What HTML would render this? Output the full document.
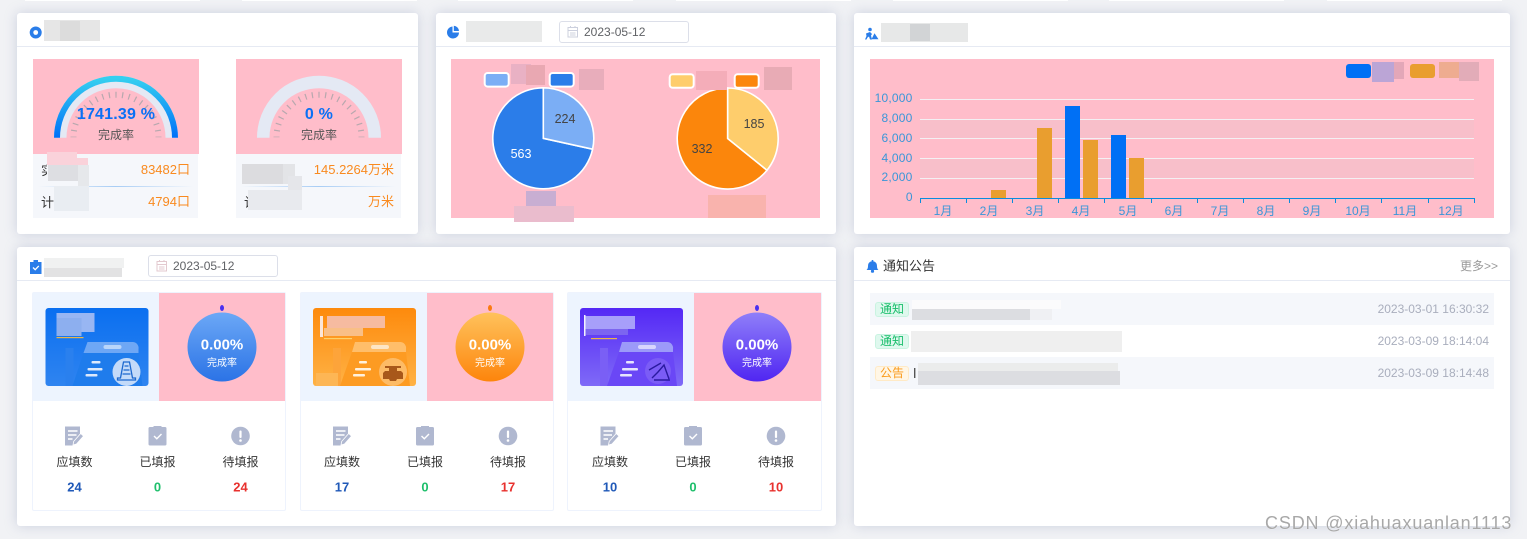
<!DOCTYPE html>
<html lang="zh-CN">
<head>
<meta charset="utf-8">
<title>Dashboard</title>
<style>
html,body{margin:0;padding:0}
body{width:1527px;height:539px;overflow:hidden;position:relative;background:#f1f2f5;font-family:"Liberation Sans","Noto Sans CJK SC",sans-serif;color:#333}
.card{position:absolute;background:#fff;border-radius:3px;box-shadow:0 0 12px rgba(150,160,190,.42)}
.a{position:absolute}
.hl{position:absolute;height:1px;background:#e6eaf3}
.c,.l,.r{position:absolute;white-space:nowrap;line-height:1}
.c{transform:translate(-50%,-50%)}
.l{transform:translateY(-50%)}
.r{transform:translate(-100%,-50%)}
.pink{position:absolute;background:#ffbdca}
.date{position:absolute;width:128px;height:20px;border:1px solid #dcdfe9;border-radius:3px;background:#fff;font-size:12px;line-height:20px;color:#606266;text-indent:24px}
.tag{position:absolute;left:875px;border-radius:3px;font-size:12px;line-height:13px;text-align:center}
.g{background:#dff8ee;border:1px solid #c9f3e1;color:#19be6b;width:32px;height:13px}
.o{background:#fff6e6;border:1px solid #ffeac6;color:#fa9b1c;width:32px;height:13px}
.time{font-size:12px;color:#a9aebd}
.big{font-size:15px;font-weight:bold;color:#fff}
.sm{font-size:10px;color:#fff}
.lb{font-size:12px;color:#333}
.n{font-size:13px;font-weight:bold}
.ax{font-size:12px;color:#3a96d8}
.or{font-size:13px;color:#f98a1f}
svg{position:absolute;left:0;top:0}
</style>
</head>
<body>
<!-- top slivers -->
<div class="a" style="left:25px;top:0;width:175px;height:1px;background:#fff"></div>
<div class="a" style="left:242px;top:0;width:175px;height:1px;background:#fff"></div>
<div class="a" style="left:458px;top:0;width:175px;height:1px;background:#fff"></div>
<div class="a" style="left:676px;top:0;width:175px;height:1px;background:#fff"></div>
<div class="a" style="left:893px;top:0;width:175px;height:1px;background:#fff"></div>
<div class="a" style="left:1109px;top:0;width:175px;height:1px;background:#fff"></div>
<div class="a" style="left:1327px;top:0;width:175px;height:1px;background:#fff"></div>

<!-- cards -->
<div class="card" style="left:17px;top:13px;width:401px;height:221px"></div>
<div class="card" style="left:436px;top:13px;width:400px;height:221px"></div>
<div class="card" style="left:854px;top:13px;width:656px;height:221px"></div>
<div class="card" style="left:17px;top:247px;width:819px;height:279px"></div>
<div class="card" style="left:854px;top:247px;width:656px;height:279px"></div>
<div class="hl" style="left:17px;top:46px;width:401px"></div>
<div class="hl" style="left:436px;top:46px;width:400px"></div>
<div class="hl" style="left:854px;top:46px;width:656px"></div>
<div class="hl" style="left:17px;top:280px;width:819px"></div>
<div class="hl" style="left:854px;top:280px;width:656px"></div>

<!-- pink panels -->
<div class="pink" style="left:33px;top:59px;width:166px;height:95px"></div>
<div class="pink" style="left:236px;top:59px;width:166px;height:95px"></div>
<div class="a" style="left:33px;top:154px;width:165px;height:64px;background:#f5f7fb"></div>
<div class="a" style="left:236px;top:154px;width:165px;height:64px;background:#f5f7fb"></div>
<div class="pink" style="left:451px;top:59px;width:369px;height:159px"></div>
<div class="pink" style="left:870px;top:59px;width:624px;height:159px"></div>

<!-- sub cards bottom -->
<div class="a" style="left:32px;top:292px;width:252px;height:217px;border:1px solid #eef3fd;border-radius:2px;background:#fff"></div>
<div class="a" style="left:300px;top:292px;width:252px;height:217px;border:1px solid #eef3fd;border-radius:2px;background:#fff"></div>
<div class="a" style="left:567px;top:292px;width:253px;height:217px;border:1px solid #eef3fd;border-radius:2px;background:#fff"></div>
<div class="a" style="left:33px;top:293px;width:126px;height:108px;background:#edf4fe"></div>
<div class="pink" style="left:159px;top:293px;width:126px;height:108px"></div>
<div class="a" style="left:301px;top:293px;width:126px;height:108px;background:#edf4fe"></div>
<div class="pink" style="left:427px;top:293px;width:126px;height:108px"></div>
<div class="a" style="left:568px;top:293px;width:126px;height:108px;background:#edf4fe"></div>
<div class="pink" style="left:694px;top:293px;width:127px;height:108px"></div>

<!-- notice rows -->
<div class="a" style="left:870px;top:293px;width:624px;height:32px;background:#f5f7fb"></div>
<div class="a" style="left:870px;top:357px;width:624px;height:32px;background:#f5f7fb"></div>

<!-- chart bands -->
<div class="a" style="left:920px;top:119px;width:554px;height:19px;background:#f8bfca"></div>
<div class="a" style="left:920px;top:158px;width:554px;height:20px;background:#f8bfca"></div>

<svg width="1527" height="539" viewBox="0 0 1527 539">
<defs>
<linearGradient id="gg" x1="0" y1="1" x2="0" y2="0"><stop offset="0" stop-color="#0070f8"/><stop offset="1" stop-color="#35cff0"/></linearGradient>
<linearGradient id="b1" x1="0" y1="0" x2="0" y2="1"><stop offset="0" stop-color="#0a6ff0"/><stop offset="1" stop-color="#2f84f0"/></linearGradient>
<linearGradient id="b2" x1="0" y1="0" x2="0" y2="1"><stop offset="0" stop-color="#fd8a0c"/><stop offset="1" stop-color="#ffb245"/></linearGradient>
<linearGradient id="b3" x1="0" y1="0" x2="0" y2="1"><stop offset="0" stop-color="#5428f5"/><stop offset="1" stop-color="#7f6af7"/></linearGradient>
<linearGradient id="c1" x1="0" y1="0" x2="0" y2="1"><stop offset="0" stop-color="#6ca8f6"/><stop offset="1" stop-color="#2b73e6"/></linearGradient>
<linearGradient id="c2" x1="0" y1="0" x2="0" y2="1"><stop offset="0" stop-color="#ffc25c"/><stop offset="1" stop-color="#fd850c"/></linearGradient>
<linearGradient id="c3" x1="0" y1="0" x2="0" y2="1"><stop offset="0" stop-color="#8f7ff9"/><stop offset="1" stop-color="#5026f2"/></linearGradient>
<linearGradient id="dv" x1="0" y1="0" x2="1" y2="0"><stop offset="0" stop-color="#a8cdf5" stop-opacity="0"/><stop offset=".5" stop-color="#a8cdf5"/><stop offset="1" stop-color="#a8cdf5" stop-opacity="0"/></linearGradient>
<clipPath id="ic"><rect width="103" height="78" rx="3"/></clipPath>
</defs>

<!-- gauges -->
<g fill="none">
<path d="M60.25 137.7A55.75 55.75 0 0 1 171.75 137.7" stroke="#e4e9f4" stroke-width="12.5"/>
<path d="M57 137.7A59 59 0 0 1 175 137.7" stroke="url(#gg)" stroke-width="6"/>
<path d="M73.5 137.2A42.5 42.5 0 0 1 158.5 137.2" stroke="#b8a8ae" stroke-width="6" pathLength="100" stroke-dasharray=".9 4.1" stroke-dashoffset=".45"/>
<path d="M263.25 137.7A55.75 55.75 0 0 1 374.75 137.7" stroke="#e4e9f4" stroke-width="12.5"/>
<path d="M276.5 137.2A42.5 42.5 0 0 1 361.5 137.2" stroke="#b8a8ae" stroke-width="6" pathLength="100" stroke-dasharray=".9 4.1" stroke-dashoffset=".45"/>
</g>
<rect x="38" y="186" width="155" height="1" fill="url(#dv)"/>
<rect x="241" y="186" width="155" height="1" fill="url(#dv)"/>

<!-- pies -->
<g stroke="#fff" stroke-width="1.6">
<path d="M543.3 138.3L592.6 149.2A50.5 50.5 0 1 1 543.3 87.8Z" fill="#2b7de9"/>
<path d="M543.3 138.3L543.3 87.8A50.5 50.5 0 0 1 592.6 149.2Z" fill="#7baef5"/>
<path d="M727.7 138.5L767 170.2A50.5 50.5 0 1 1 727.7 88Z" fill="#fb860c"/>
<path d="M727.7 138.5L727.7 88A50.5 50.5 0 0 1 767 170.2Z" fill="#fecd6c"/>
</g>
<g stroke="#fff" stroke-width="2">
<rect x="484.7" y="73" width="24" height="13.6" rx="3" fill="#7baef5"/>
<rect x="549.7" y="73" width="24" height="13.6" rx="3" fill="#2b7de9"/>
<rect x="669.7" y="74.2" width="24" height="13.6" rx="3" fill="#fecd6c"/>
<rect x="734.7" y="74.2" width="24" height="13.6" rx="3" fill="#fb860c"/>
</g>

<!-- bar chart -->
<g fill="#f3f0f3">
<rect x="920" y="99" width="554" height="1"/><rect x="920" y="119" width="554" height="1"/><rect x="920" y="138" width="554" height="1"/><rect x="920" y="158" width="554" height="1"/><rect x="920" y="178" width="554" height="1"/>
</g>
<g fill="#0a8ddc">
<rect x="920" y="198" width="555" height="1"/>
<rect x="920" y="198" width="1" height="5"/><rect x="966" y="198" width="1" height="5"/><rect x="1012" y="198" width="1" height="5"/><rect x="1058" y="198" width="1" height="5"/><rect x="1104" y="198" width="1" height="5"/><rect x="1151" y="198" width="1" height="5"/><rect x="1197" y="198" width="1" height="5"/><rect x="1243" y="198" width="1" height="5"/><rect x="1289" y="198" width="1" height="5"/><rect x="1335" y="198" width="1" height="5"/><rect x="1381" y="198" width="1" height="5"/><rect x="1428" y="198" width="1" height="5"/><rect x="1474" y="198" width="1" height="5"/>
</g>
<g fill="#e99e2f">
<rect x="991" y="190" width="15" height="8"/>
<rect x="1037" y="128" width="15" height="70"/>
<rect x="1083" y="140" width="15" height="58"/>
<rect x="1129" y="158" width="15" height="40"/>
<rect x="1410" y="64" width="25" height="14" rx="3"/>
</g>
<g fill="#0070f5">
<rect x="1065" y="106" width="15" height="92"/>
<rect x="1111" y="135" width="15" height="63"/>
<rect x="1346" y="64" width="25" height="14" rx="3"/>
</g>

<!-- blur patches -->
<g>
<rect x="44" y="20" width="56" height="21" fill="#e6e6e6"/><rect x="60" y="21" width="20" height="20" fill="#dcdcdc"/>
<rect x="47" y="152" width="30" height="6" fill="#fad2da"/><rect x="47" y="158" width="41" height="7" fill="#fad2da"/><rect x="48" y="165" width="30" height="16" fill="#dddee2"/><rect x="78" y="165" width="11" height="21" fill="#e6e8eb"/><rect x="54" y="186" width="35" height="25" fill="#e9edf2"/>
<rect x="242" y="164" width="41" height="20" fill="#dcdcdf"/><rect x="283" y="164" width="12" height="20" fill="#e3e4e7"/><rect x="288" y="176" width="14" height="14" fill="#e5e6ea"/><rect x="248" y="190" width="54" height="20" fill="#e8eaee"/>
<rect x="466" y="21" width="76" height="21" fill="#e9eaea"/>
<rect x="511" y="64" width="20" height="20" fill="#e9b1c4"/><rect x="526" y="65" width="19" height="20" fill="#e9a8b2"/>
<rect x="579" y="69" width="25" height="21" fill="#e8adbb"/>
<rect x="696" y="71" width="31" height="19" fill="#f4adb9"/><rect x="764" y="67" width="28" height="23" fill="#e8abb5"/>
<rect x="526" y="191" width="30" height="15" fill="#c8aed2"/><rect x="514" y="206" width="60" height="16" fill="#eabccd"/>
<rect x="708" y="195" width="58" height="23" fill="#f9b3ad"/>
<rect x="881" y="23" width="87" height="19" fill="#e7e8e8"/><rect x="910" y="24" width="20" height="17" fill="#d2d4d6"/>
<rect x="1372" y="62" width="22" height="20" fill="#bba5d6"/><rect x="1394" y="62" width="10" height="17" fill="#e3a7b8"/>
<rect x="1439" y="62" width="20" height="16" fill="#eeac90"/><rect x="1459" y="62" width="20" height="19" fill="#e2acb8"/>
<rect x="44" y="258" width="80" height="10" fill="#f0f1f1"/><rect x="44" y="268" width="78" height="9" fill="#e2e2e3"/>
<rect x="912" y="300" width="149" height="9" fill="#fbfbfc"/><rect x="912" y="309" width="118" height="11" fill="#dcdde1"/><rect x="1030" y="309" width="22" height="11" fill="#eff0f3"/>
<rect x="911" y="331" width="211" height="21" fill="#efefef"/>
<rect x="918" y="363" width="200" height="11" fill="#ebecec"/><rect x="918" y="371" width="202" height="14" fill="#dcdde1"/>
<rect x="914" y="368" width="1.4" height="10" fill="#555"/>
</g>

<!-- header icons -->
<circle cx="35.7" cy="32.5" r="6" fill="#2a7de9"/><circle cx="35.7" cy="32.5" r="2.4" fill="#fff"/>
<path d="M452.5 26.5A6 6 0 1 0 459 32.5H452.5Z" fill="#2a7de9"/><path d="M453.8 25.8A5.5 5.5 0 0 1 459 31H453.8Z" fill="#2a7de9"/>
<circle cx="870" cy="29.5" r="1.8" fill="#2a7de9"/><path d="M866 33.5l4-1.5 2 2-1 1.5 1 4h-2l-1-3-1.5 1-1 2h-1.5l1.5-3.5ZM871.5 39.3l3-6 4 6Z" fill="#2a7de9"/>
<path d="M30 262h3.5v-2h4.5v2h3.5v12H30Z" fill="#2a7de9"/><path d="M33 267.5l2.2 2.2 3.6-3.8" fill="none" stroke="#fff" stroke-width="1.3"/>
<path d="M866.5 270c1.6-1.2 1.4-3 1.6-5 .2-2.2 2-3.8 4.4-3.8s4.2 1.6 4.4 3.8c.2 2 0 3.8 1.6 5Z" fill="#2a7de9"/><circle cx="872.5" cy="271.2" r="1.6" fill="#2a7de9"/><rect x="871.7" y="260" width="1.6" height="2" fill="#2a7de9"/>

<!-- image card 1 -->
<g transform="translate(45.5 308)"><g clip-path="url(#ic)">
<rect width="103" height="78" fill="url(#b1)"/>
<rect x="20" y="40" width="8" height="38" fill="#2a80ee"/>
<path d="M42 34H87a6 6 0 0 1 6 7v4H38Z" fill="#6ea7f5"/>
<path d="M38 45H93L97 78H27Z" fill="#1f7cec"/>
<rect x="58" y="37" width="18" height="4" rx="2" fill="#b9d5fa"/>
<g fill="#dce9fc"><rect x="46" y="53" width="9" height="2.5" rx="1"/><rect x="42" y="60" width="15" height="2.5" rx="1"/><rect x="40" y="66" width="12" height="2.5" rx="1"/></g>
<circle cx="81" cy="64" r="14" fill="#c3daf9"/>
<path d="M78 54h6l3 16h3v2H72v-2h3ZM79 58h4M78 62h6M77 66h8" fill="none" stroke="#1c68cf" stroke-width="1.3"/>
<rect x="11" y="5" width="38" height="19" fill="#98b6f3"/><rect x="11" y="10" width="25" height="18" fill="#8dafef"/><rect x="11" y="29" width="27" height="1.2" fill="#e9b64a"/>
</g></g>
<!-- image card 2 -->
<g transform="translate(313 308)"><g clip-path="url(#ic)">
<rect width="103" height="78" fill="url(#b2)"/>
<rect x="20" y="40" width="8" height="38" fill="#fda43a"/><rect x="3" y="65" width="22" height="13" fill="#fdb655"/>
<path d="M42 34H87a6 6 0 0 1 6 7v3H39Z" fill="#ffbe6a"/>
<path d="M39 44H93L97 78H27Z" fill="#fd9b22"/>
<rect x="58" y="37" width="18" height="4" rx="2" fill="#fde6c6"/>
<g fill="#fff1dc"><rect x="46" y="53" width="8" height="2.5" rx="1"/><rect x="42" y="60" width="16" height="2.5" rx="1"/><rect x="40" y="66" width="12" height="2.5" rx="1"/></g>
<circle cx="80" cy="64" r="14" fill="#fdbb66"/>
<path d="M72 58h16v2h-4v3h4l2 2v6H84l-1 2H77l-1-2H70v-6l2-2h4v-3h-4Z" fill="#a8581a"/>
<rect x="14" y="8" width="58" height="12" fill="#f6bba0"/><rect x="11" y="20" width="39" height="8" fill="#f9bf86"/><rect x="7" y="8" width="3" height="21" fill="#fbe6d8"/><rect x="11" y="30" width="28" height="1.2" fill="#fdd26a"/>
</g></g>
<!-- image card 3 -->
<g transform="translate(580 308)"><g clip-path="url(#ic)">
<rect width="103" height="78" fill="url(#b3)"/>
<rect x="20" y="40" width="8" height="38" fill="#7a5ff5"/>
<path d="M42 34H87a6 6 0 0 1 6 7v3H39Z" fill="#9c9af9"/>
<path d="M39 44H93L97 78H27Z" fill="#6a47f6"/>
<rect x="58" y="37" width="18" height="4" rx="2" fill="#d9d6fd"/>
<g fill="#e7e4fd"><rect x="46" y="53" width="8" height="2.5" rx="1"/><rect x="42" y="60" width="16" height="2.5" rx="1"/><rect x="40" y="66" width="12" height="2.5" rx="1"/></g>
<circle cx="78" cy="63" r="13" fill="#7b5cf6"/>
<path d="M72 70l6-6 6-7 5 14M69 62l12-7M74 72h16" fill="none" stroke="#2a1aa0" stroke-width="1.4"/>
<rect x="5" y="8" width="50" height="13" fill="#a79ffa"/><rect x="5" y="21" width="43" height="6" fill="#7c65f0"/><rect x="4" y="7" width="1.5" height="21" fill="#f2f0ff"/><rect x="11" y="30" width="26" height="1.2" fill="#e9b64a"/>
</g></g>

<!-- circles -->
<circle cx="222" cy="347" r="34.5" fill="url(#c1)"/><ellipse cx="222" cy="308" rx="2" ry="3" fill="#4a30f0"/>
<circle cx="490" cy="347" r="34.5" fill="url(#c2)"/><ellipse cx="490" cy="308" rx="2" ry="3" fill="#fb7a10"/>
<circle cx="757" cy="347" r="34.5" fill="url(#c3)"/><ellipse cx="757" cy="308" rx="2" ry="3" fill="#4a30f0"/>

<!-- stat icons -->
<defs>
<g id="doc"><path d="M-8.5-9.5H6.5V-1L-.5 9.5H-8.5Z" fill="#b0b8d0"/><path d="M-5.5-5H4M-5.5-1H3M-5.5 3H-1" stroke="#fff" stroke-width="1.5"/><path d="M-.5 9l.7-3.6L7.2-2.5l2.8 2.6L3 8Z" fill="#b0b8d0" stroke="#fff" stroke-width=".8"/></g>
<g id="clip"><path d="M-9-7.5a1.5 1.5 0 0 1 1.5-1.5H-4v-1H4v1H7.5A1.5 1.5 0 0 1 9-7.5V8A1.5 1.5 0 0 1 7.5 9.5h-15A1.5 1.5 0 0 1-9 8Z" fill="#b0b8d0"/><path d="M-3.5 0l2.8 2.8L4 -2" fill="none" stroke="#fff" stroke-width="1.4"/></g>
<g id="ex"><circle r="9.3" fill="#b0b8d0"/><rect x="-1.1" y="-5.5" width="2.2" height="7.5" rx="1" fill="#fff"/><circle cy="4.5" r="1.3" fill="#fff"/></g>
</defs>
<use href="#doc" x="73.5" y="436"/><use href="#clip" x="157.5" y="436"/><use href="#ex" x="240.5" y="436"/>
<use href="#doc" x="341.5" y="436"/><use href="#clip" x="425" y="436"/><use href="#ex" x="508" y="436"/>
<use href="#doc" x="609" y="436"/><use href="#clip" x="693" y="436"/><use href="#ex" x="776" y="436"/>
</svg>

<!-- gauge text -->
<div class="c" style="left:116px;top:115px;font-size:16px;font-weight:bold;color:#0a70f5;letter-spacing:.2px">1741.39 %</div>
<div class="c" style="left:116px;top:135px;font-size:12px;color:#555">完成率</div>
<div class="c" style="left:319px;top:115px;font-size:16px;font-weight:bold;color:#0a70f5;letter-spacing:.2px">0 %</div>
<div class="c" style="left:319px;top:135px;font-size:12px;color:#555">完成率</div>

<div class="r" style="left:190px;top:170px"><span class="or">83482口</span></div>
<div class="r" style="left:190px;top:202px"><span class="or">4794口</span></div>
<div class="r" style="left:394px;top:170px"><span class="or">145.2264万米</span></div>
<div class="r" style="left:394px;top:202px"><span class="or">万米</span></div>
<div class="a" style="left:41px;top:164px;width:6px;height:13px;overflow:hidden;font-size:13px;line-height:13px">实</div>
<div class="a" style="left:41px;top:196px;width:13px;height:13px;overflow:hidden;font-size:13px;line-height:13px">计</div>
<div class="a" style="left:244px;top:196px;width:4px;height:13px;overflow:hidden;font-size:13px;line-height:13px">计</div>

<!-- dates -->
<div class="date" style="left:559px;top:21px">2023-05-12</div>
<div class="date" style="left:148px;top:255px">2023-05-12</div>
<svg width="1527" height="539" viewBox="0 0 1527 539">
<g fill="none" stroke="#ccd0de" stroke-width="1">
<rect x="568" y="27.5" width="9.5" height="9.5"/><path d="M568 30.5h9.5M570.5 26v2M575 26v2M570 33h5.5M570 35h5.5"/>
<g stroke="#e3c9cf"><rect x="157" y="261.5" width="9.5" height="9.5"/><path d="M157 264.5h9.5M159.5 260v2M164 260v2M159 267h5.5M159 269h5.5"/></g>
</g>
</svg>

<!-- pie labels -->
<div class="c" style="left:565px;top:119px;font-size:12.5px;color:#444">224</div>
<div class="c" style="left:521px;top:154px;font-size:12.5px;color:#fff">563</div>
<div class="c" style="left:754px;top:124px;font-size:12.5px;color:#444">185</div>
<div class="c" style="left:702px;top:149px;font-size:12.5px;color:#444">332</div>

<!-- chart axes -->
<div class="r ax" style="left:912.5px;top:98px;letter-spacing:.2px">10,000</div>
<div class="r ax" style="left:912.5px;top:118px;letter-spacing:.2px">8,000</div>
<div class="r ax" style="left:912.5px;top:138px;letter-spacing:.2px">6,000</div>
<div class="r ax" style="left:912.5px;top:158px;letter-spacing:.2px">4,000</div>
<div class="r ax" style="left:912.5px;top:177px;letter-spacing:.2px">2,000</div>
<div class="r ax" style="left:912.5px;top:197px">0</div>
<div class="c ax" style="left:943px;top:211px">1月</div>
<div class="c ax" style="left:989px;top:211px">2月</div>
<div class="c ax" style="left:1035px;top:211px">3月</div>
<div class="c ax" style="left:1081px;top:211px">4月</div>
<div class="c ax" style="left:1128px;top:211px">5月</div>
<div class="c ax" style="left:1174px;top:211px">6月</div>
<div class="c ax" style="left:1220px;top:211px">7月</div>
<div class="c ax" style="left:1266px;top:211px">8月</div>
<div class="c ax" style="left:1312px;top:211px">9月</div>
<div class="c ax" style="left:1358px;top:211px">10月</div>
<div class="c ax" style="left:1405px;top:211px">11月</div>
<div class="c ax" style="left:1451px;top:211px">12月</div>

<!-- circle text -->
<div class="c big" style="left:222px;top:345px">0.00%</div><div class="c sm" style="left:222px;top:364px">完成率</div>
<div class="c big" style="left:490px;top:345px">0.00%</div><div class="c sm" style="left:490px;top:364px">完成率</div>
<div class="c big" style="left:757px;top:345px">0.00%</div><div class="c sm" style="left:757px;top:364px">完成率</div>

<!-- stats -->
<div class="c lb" style="left:74.5px;top:462px">应填数</div><div class="c lb" style="left:157.5px;top:462px">已填报</div><div class="c lb" style="left:240.5px;top:462px">待填报</div>
<div class="c n" style="left:74.5px;top:487px;color:#2059b8">24</div><div class="c n" style="left:157.5px;top:487px;color:#1fbf6c">0</div><div class="c n" style="left:240.5px;top:487px;color:#e8312e">24</div>
<div class="c lb" style="left:342px;top:462px">应填数</div><div class="c lb" style="left:425px;top:462px">已填报</div><div class="c lb" style="left:508px;top:462px">待填报</div>
<div class="c n" style="left:342px;top:487px;color:#2059b8">17</div><div class="c n" style="left:425px;top:487px;color:#1fbf6c">0</div><div class="c n" style="left:508px;top:487px;color:#e8312e">17</div>
<div class="c lb" style="left:610px;top:462px">应填数</div><div class="c lb" style="left:693px;top:462px">已填报</div><div class="c lb" style="left:776px;top:462px">待填报</div>
<div class="c n" style="left:610px;top:487px;color:#2059b8">10</div><div class="c n" style="left:693px;top:487px;color:#1fbf6c">0</div><div class="c n" style="left:776px;top:487px;color:#e8312e">10</div>

<!-- notices -->
<div class="l" style="left:883px;top:266px;font-size:13px;color:#333">通知公告</div>
<div class="r" style="left:1498px;top:266px;font-size:12px;color:#9a9a9a">更多&gt;&gt;</div>
<div class="tag g" style="top:302px">通知</div>
<div class="tag g" style="top:334px">通知</div>
<div class="tag o" style="top:366px">公告</div>
<div class="r time" style="left:1489px;top:309px">2023-03-01 16:30:32</div>
<div class="r time" style="left:1489px;top:341px">2023-03-09 18:14:04</div>
<div class="r time" style="left:1489px;top:373px">2023-03-09 18:14:48</div>

<!-- watermark -->
<div class="a" style="left:1265px;top:513px;font-size:18px;line-height:20px;white-space:nowrap;color:#a8a8a8;text-shadow:0 0 1px #fff;letter-spacing:.85px">CSDN @xiahuaxuanlan1113</div>
</body>
</html>
